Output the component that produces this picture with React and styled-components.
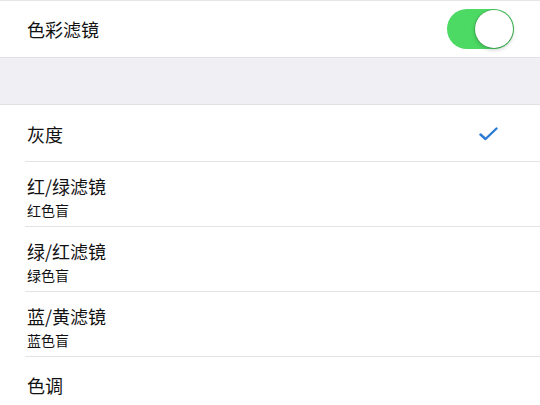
import React from "react";
import styled, { createGlobalStyle } from "styled-components";

const Global = createGlobalStyle`
  html, body { margin: 0; padding: 0; background: #ffffff; }
  body { font-family: "Noto Sans CJK SC", "Noto Sans", sans-serif; color: #111; }
`;

const Page = styled.div`
  width: 540px;
  height: 405px;
  overflow: hidden;
  background: #ffffff;
`;

const Group = styled.div`
  background: #ffffff;
  border-top: ${(p) => (p.$top ? "1px solid #e6e6ea" : "none")};
  border-bottom: ${(p) => (p.$bottom ? "1px solid #e1e1e6" : "none")};
`;

const Spacer = styled.div`
  height: 46px;
  background: #efeff4;
  border-bottom: 1px solid #e1e1e6;
`;

const Row = styled.div`
  display: flex;
  align-items: center;
  justify-content: space-between;
  height: ${(p) => (p.$tall ? "65px" : p.$sep ? "57px" : "56px")};
  padding: 0 26px 0 27px;
  box-sizing: border-box;
  position: relative;
  &::after {
    content: "";
    display: ${(p) => (p.$sep ? "block" : "none")};
    position: absolute;
    left: 25px;
    right: 0;
    bottom: 0;
    height: 1px;
    background: #e4e4e8;
  }
`;

const Texts = styled.div`
  display: flex;
  flex-direction: column;
  padding-top: 2px;
`;

const Title = styled.div`
  font-size: 18px;
  line-height: ${(p) => (p.$stacked ? "28px" : "24px")};
  color: #111;
`;

const Sub = styled.div`
  font-size: 14px;
  line-height: 20px;
  color: #111;
`;

const Switch = styled.div`
  width: 67px;
  height: 40px;
  border-radius: 20px;
  background: #4cd964;
  position: relative;
  box-sizing: border-box;
`;

const Knob = styled.div`
  position: absolute;
  right: 1px;
  top: 1px;
  width: 38px;
  height: 38px;
  border-radius: 50%;
  background: #ffffff;
  box-shadow: 0 2px 4px rgba(0, 0, 0, 0.2), 0 0 0 0.6px rgba(40, 120, 60, 0.55);
`;

const Check = () => (
  <svg width="19" height="14" viewBox="0 0 19 14" style={{ marginRight: 16 }}>
    <path d="M1.5 7.5 L6.5 12 L17.5 1.5" fill="none" stroke="#2b7bd4" strokeWidth="2.4" strokeLinecap="round" strokeLinejoin="round" />
  </svg>
);

const items = [
  { t: "红/绿滤镜", s: "红色盲" },
  { t: "绿/红滤镜", s: "绿色盲" },
  { t: "蓝/黄滤镜", s: "蓝色盲" },
];

export default function App() {
  return (
    <Page>
      <Global />
      <Group $top $bottom>
        <Row>
          <Title>色彩滤镜</Title>
          <Switch>
            <Knob />
          </Switch>
        </Row>
      </Group>
      <Spacer />
      <Group>
        <Row $sep>
          <Title>灰度</Title>
          <Check />
        </Row>
        {items.map((it) => (
          <Row key={it.t} $tall $sep>
            <Texts>
              <Title $stacked>{it.t}</Title>
              <Sub>{it.s}</Sub>
            </Texts>
          </Row>
        ))}
        <Row>
          <Title>色调</Title>
        </Row>
      </Group>
    </Page>
  );
}
